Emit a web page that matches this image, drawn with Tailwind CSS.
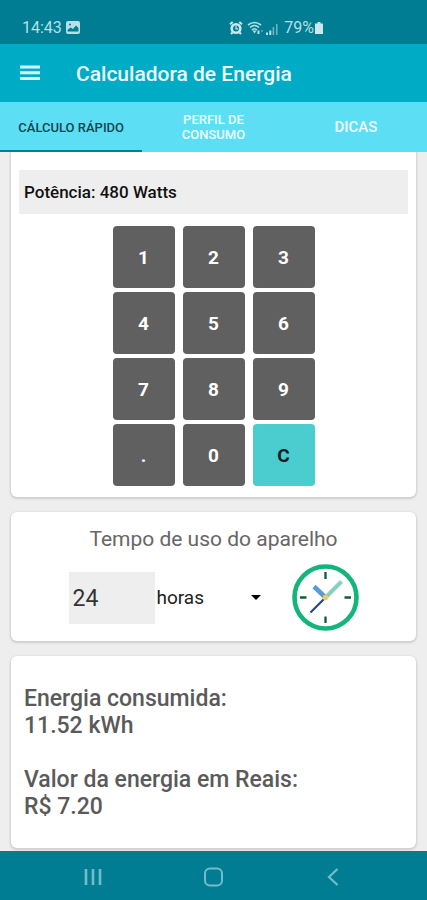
<!DOCTYPE html>
<html lang="pt-BR">
<head>
<meta charset="utf-8">
<meta name="viewport" content="width=device-width, initial-scale=1">
<title>Calculadora de Energia</title>
<script src="https://cdn.jsdelivr.net/npm/@tailwindcss/browser@4"></script>
</head>
<body class="flex h-screen flex-col overflow-hidden bg-[#eeeeee] font-[Roboto,sans-serif]">
  <div class="flex h-11 shrink-0 items-center bg-[#007d93] px-[22px] pt-3 text-base leading-5 text-[#b9dfe6]">
    <span>14:43</span>
    <svg class="mb-0.5 ml-1 h-[13px] w-[14px]" viewBox="0 0 14 13" aria-hidden="true">
      <rect width="14" height="13" rx="2" fill="#b9dfe6"/>
      <path d="M1.500 10.500V9l3-2.500 2.500 1.500L10 4.500l2.500 2.500v3.500z" fill="#007d93"/>
      <circle cx="4" cy="3.500" r="1" fill="#007d93"/>
    </svg>
    <div class="ml-auto flex items-center pr-[82px]">
      <svg class="h-3.5 w-3.5" viewBox="0 0 14 14" fill="none" stroke="#cbe8ed" aria-hidden="true">
        <circle cx="7" cy="7.500" r="4.300" stroke-width="2.600"/>
        <path d="M1 3.200 3.700 1M13 3.200 10.300 1M3.500 11.500 2 13M10.500 11.500 12 13" stroke-width="2"/>
        <path d="M7 5v2.800h2" stroke-width="1.200"/>
      </svg>
      <svg class="ml-1 h-3.5 w-[17px]" viewBox="0 0 17 14" fill="none" stroke="#b9dfe6" aria-hidden="true">
        <path d="M1 4Q7.500-1 14 4M3 6.500Q7.500 2.500 12 6.500M5 9Q7.500 6.500 10 9" stroke-width="1.600"/>
        <path d="M5.500 9.500h4L7.500 12.500z" fill="#b9dfe6" stroke="none"/>
        <path d="M11.500 9.500v3.500" stroke-width="2"/>
        <path d="M15 9v2" stroke="#6fb6c3" stroke-width="1.200"/>
      </svg>
      <svg class="mt-0.5 ml-0.5 h-3 w-3" viewBox="0 0 12 12" aria-hidden="true">
        <path d="M0 9.500h2V12H0zM3.300 7.500h2V12h-2z" fill="#b9dfe6"/>
        <path d="M6.600 4h1.600v8H6.600zM10 1h1.500v11H10z" fill="#6fb6c3"/>
      </svg>
      <span class="ml-1.5">79%</span>
      <svg class="ml-px h-3 w-2" viewBox="0 0 8 12" aria-hidden="true">
        <path d="M2.500 0h3v1.500H8V12H0V1.500h2.500z" fill="#cbe8ed"/>
      </svg>
    </div>
  </div>

  <header class="flex h-[58px] shrink-0 items-center gap-9 bg-[#00acc5] px-5">
    <button type="button" aria-label="Menu" class="h-5 w-5">
      <svg class="h-5 w-5" viewBox="0 0 20 20" aria-hidden="true"><path d="M0 2.500h20v3H0zM0 8.200h20v3H0zM0 14h20v3H0z" fill="#d3f5fa"/></svg>
    </button>
    <h1 class="pt-0.5 text-[21px] leading-7 font-medium text-[#eefcff]">Calculadora de Energia</h1>
  </header>

  <nav class="grid h-[50px] shrink-0 grid-cols-3 bg-[#5cdff5] text-center font-medium text-[#effdff]" aria-label="Seções">
    <a href="#calculo" aria-current="page" class="flex items-center justify-center border-b-2 border-[#087f91] pt-0.5 text-[13px] leading-[15px] text-[#12454e]">CÁLCULO RÁPIDO</a>
    <a href="#perfil" class="flex items-center justify-center text-[13px] leading-[15px]">PERFIL DE<br>CONSUMO</a>
    <a href="#dicas" class="flex items-center justify-center text-[15px] leading-5">DICAS</a>
  </nav>

  <main class="flex min-h-0 flex-1 flex-col gap-[15px] overflow-hidden px-[11px]">
    <section id="calculo" class="rounded-b-md bg-white px-2 pt-[18px] pb-[11px] shadow-[0_1px_2px_1px_#cfcfcf]">
      <output class="block bg-[#eeeeee] px-[5px] py-2.5 text-[17px] leading-6 font-medium text-[#111111]">Potência: 480 Watts</output>
      <div class="mt-3 grid grid-cols-[repeat(3,62px)] justify-center gap-x-2 gap-y-1 text-[19px] font-bold text-white">
        <button type="button" class="h-[62px] rounded-sm bg-[#606060] pt-0.5">1</button>
        <button type="button" class="h-[62px] rounded-sm bg-[#606060] pt-0.5">2</button>
        <button type="button" class="h-[62px] rounded-sm bg-[#606060] pt-0.5">3</button>
        <button type="button" class="h-[62px] rounded-sm bg-[#606060] pt-0.5">4</button>
        <button type="button" class="h-[62px] rounded-sm bg-[#606060] pt-0.5">5</button>
        <button type="button" class="h-[62px] rounded-sm bg-[#606060] pt-0.5">6</button>
        <button type="button" class="h-[62px] rounded-sm bg-[#606060] pt-0.5">7</button>
        <button type="button" class="h-[62px] rounded-sm bg-[#606060] pt-0.5">8</button>
        <button type="button" class="h-[62px] rounded-sm bg-[#606060] pt-0.5">9</button>
        <button type="button" class="h-[62px] rounded-sm bg-[#606060] pt-0.5">.</button>
        <button type="button" class="h-[62px] rounded-sm bg-[#606060] pt-0.5">0</button>
        <button type="button" class="h-[62px] rounded-sm bg-[#4bcdcf] pt-0.5 text-[#0c2020]">C</button>
      </div>
    </section>

    <section class="rounded-md bg-white pt-[13px] pb-2.5 shadow-[0_1px_2px_1px_#cfcfcf]">
      <h2 class="text-center text-[21px] leading-7 text-[#666666]"><label for="tempo">Tempo de uso do aparelho</label></h2>
      <div class="mt-[11px] flex items-center justify-center">
        <input id="tempo" type="text" inputmode="numeric" value="24" class="h-[52px] w-[86px] bg-[#eeeeee] px-1 pt-0.5 text-[23px] text-[#333333]">
        <div class="grid w-[137px] items-center">
          <select aria-label="Unidade de tempo" class="col-start-1 row-start-1 h-10 w-[118px] appearance-none bg-transparent pt-0.5 pl-0.5 text-[19px] text-[#222222]">
            <option>horas</option>
            <option>minutos</option>
          </select>
          <svg class="pointer-events-none col-start-1 row-start-1 ml-24 h-[5px] w-2.5" viewBox="0 0 10 5" aria-hidden="true"><path d="M0 0h10L5 5z" fill="#000"/></svg>
        </div>
        <svg class="h-[67px] w-[67px]" viewBox="0 0 67 67" fill="none" aria-hidden="true">
          <circle cx="33.500" cy="33.500" r="31" stroke="#14b57a" stroke-width="4.600"/>
          <path d="M33.500 8v7M33.500 52.500v6.500M8 33.500h6.500M52.500 33.500H59" stroke="#12593f" stroke-width="2.300"/>
          <path d="M33.500 33.500 18.500 48.500" stroke="#204a70" stroke-width="2.200"/>
          <path d="M33 33 22 22.500" stroke="#5a9bd5" stroke-width="4.600"/>
          <path d="M34 33 49.500 17.500" stroke="#87d2bd" stroke-width="4"/>
          <circle cx="33.500" cy="33.500" r="2.800" fill="#f7c56b"/>
        </svg>
      </div>
    </section>

    <section class="rounded-md bg-white px-[13px] pt-[29px] pb-7 text-[23px] leading-[27px] font-medium text-[#5a5a5a] shadow-[0_1px_2px_1px_#cfcfcf]">
      <p>Energia consumida:<br>11.52 kWh</p>
      <p class="mt-[27px]">Valor da energia em Reais:<br>R$ 7.20</p>
    </section>
  </main>

  <footer class="flex h-[49px] shrink-0 items-center justify-center gap-[100px] bg-[#007d93] pt-0.5">
    <button type="button" aria-label="Recentes" class="h-5 w-5">
      <svg class="h-5 w-5" viewBox="0 0 20 20" aria-hidden="true"><path d="M2 2v16M9 2v16M16 2v16" stroke="#73bdca" stroke-width="2.600"/></svg>
    </button>
    <button type="button" aria-label="Início" class="h-5 w-5">
      <svg class="h-5 w-5" viewBox="0 0 20 20" aria-hidden="true"><rect x="1" y="1.500" width="17" height="17" rx="5" fill="none" stroke="#73bdca" stroke-width="2"/></svg>
    </button>
    <button type="button" aria-label="Voltar" class="h-5 w-5">
      <svg class="h-5 w-5" viewBox="0 0 20 20" aria-hidden="true"><path d="M13.500 2 5 10l8.500 8" fill="none" stroke="#73bdca" stroke-width="2.200"/></svg>
    </button>
  </footer>
</body>
</html>
